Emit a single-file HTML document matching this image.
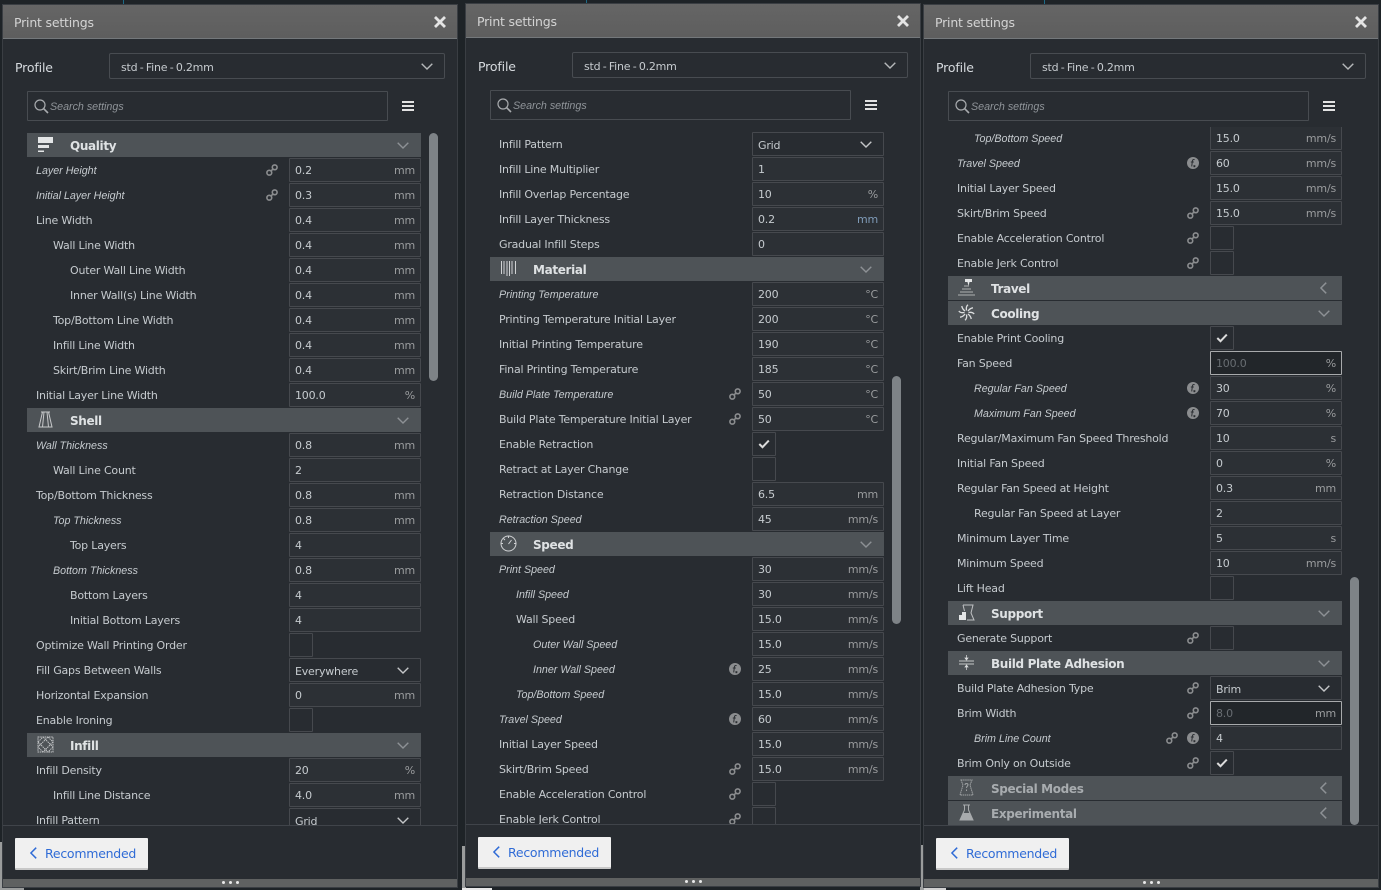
<!DOCTYPE html>
<html><head><meta charset="utf-8"><title>Print settings</title>
<style>
html,body{margin:0;padding:0;background:#1e2327;width:1381px;height:890px;overflow:hidden}
*{box-sizing:border-box}
body{font-family:"DejaVu Sans","Liberation Sans",sans-serif;font-size:11px;letter-spacing:-.2px;color:#c6cbcf}
.p{position:absolute;width:460px;height:890px}
.f{position:absolute;left:3px;top:5px;width:454px;height:882px;background:#282c31;box-shadow:0 0 0 1px #3a3e43}
.tb{position:absolute;left:3px;top:5px;width:454px;height:34px;background:linear-gradient(#656565,#5e5e5e);border-bottom:1px solid #74787b;color:#d4d4d4;font-size:12.5px;letter-spacing:-.2px;line-height:36px;padding-left:11px}
.x{position:absolute;left:433px;top:15px;width:14px;height:14px}
.pl{position:absolute;left:15px;top:59px;font-size:12.5px;letter-spacing:-.15px;line-height:18px;color:#d6dade}
.ps{position:absolute;left:109px;top:53px;width:336px;height:26px;border:1px solid #484c51;border-radius:2px;line-height:27px;padding-left:11px;color:#c6cbcf;word-spacing:-.9px;letter-spacing:-.22px}
.s{position:absolute;left:27px;top:91px;width:361px;height:30px;border:1px solid #484c51;border-radius:1px;line-height:31px;padding-left:22px;font-family:"Liberation Sans",sans-serif;font-size:10.7px;letter-spacing:0;font-style:italic;color:#8f9499}
.hb{position:absolute;left:402px;top:101px;width:12px;height:10px;border-top:2px solid #e2e2e2;border-bottom:2px solid #e2e2e2}
.hb:after{content:"";position:absolute;left:0;right:0;top:2px;height:2px;background:#e2e2e2}
.v{position:absolute;left:0;top:127px;width:460px;height:698px;overflow:hidden}
.sp{height:6px}
.r{position:relative;height:25px;line-height:26px;white-space:nowrap}
.r>span,.r>em{position:absolute;left:36px;top:0;font-style:normal}
.r>em{font-style:italic;font-family:"Liberation Sans",sans-serif;font-size:10.7px;letter-spacing:0}
.r>.a{left:53px}
.r>.c{left:70px}
.b{position:absolute;left:289px;top:0;width:132px;height:24px;background:#2c3035;border:1px solid #46494e;border-radius:1px;padding-left:5px;line-height:24px;color:#c6cbcf}
.b u{position:absolute;right:5px;top:0;text-decoration:none;color:#9a9c9e}
.fo{background:#22262a;border-color:#a8aaac;color:#686d72}
.cb{position:absolute;left:289px;top:0;width:24px;height:24px;background:#282c31;border:1px solid #46494e;border-radius:1px}
.se{line-height:26px;background:#282c31}
.h{position:relative;margin-left:27px;width:394px;height:24px;margin-bottom:1px;background:#4e5357;font-weight:bold;font-size:12px;letter-spacing:-.35px;line-height:26px;color:#dfe2e4}
.h b{position:absolute;left:43px;top:0}
.dim{color:#a8acaf}
.h svg.i{position:absolute;left:10px;top:3px;width:17px;height:17px}
svg.ch{position:absolute;left:370px;top:9px;width:12px;height:7px}
svg.cl{position:absolute;left:372px;top:6px;width:7px;height:12px}
svg.sc{position:absolute;left:107px;top:8px;width:12px;height:7px}
svg.lk{position:absolute;left:266px;top:6px;width:12px;height:12px}
svg.l2{left:245px}
svg.fx{position:absolute;left:266px;top:6px;width:12px;height:12px}
svg.ck{position:absolute;left:5px;top:6px;width:12px;height:10px}
.sb{position:absolute;left:429px;width:9px;height:248px;background:#7e8387;border-radius:4.5px}
.ft{position:absolute;left:3px;top:825px;width:454px;height:1px;background:#40444a}
.bt{position:absolute;left:15px;top:838px;width:133px;height:32px;background:#f0f0f0;border-bottom:2px solid #c8c8c8;border-radius:1px;color:#2f6bd6;font-size:12.5px;letter-spacing:-.25px;line-height:32px;padding-left:30px}
.bt svg{position:absolute;left:15px;top:9px;width:7px;height:12px}
.bb{position:absolute;left:3px;top:879px;width:454px;height:8px;background:#5f6161}
.bb i{position:absolute;top:2px;width:3px;height:3px;border-radius:50%;background:#e8e8e8}
.g{position:absolute;background:#9a9c9c}
</style></head><body>
<svg width="0" height="0" style="position:absolute">
<defs>
<symbol id="dn" viewBox="0 0 12 7"><path d="M.7.7 6 6 11.3.7" fill="none" stroke="currentColor" stroke-width="1.4"/></symbol>
<symbol id="lf" viewBox="0 0 7 12"><path d="M6.2.7.9 6l5.3 5.3" fill="none" stroke="currentColor" stroke-width="1.5"/></symbol>
<symbol id="lk" viewBox="0 0 12 12"><g fill="none" stroke="#8b8d8f" stroke-width="1.600"><circle cx="3.300" cy="8.700" r="2.400"/><circle cx="8.700" cy="3.300" r="2.400"/></g><path d="M4.600 7.400 7.400 4.600" stroke="#8b8d8f" stroke-width="1.600"/></symbol>
<symbol id="fx" viewBox="0 0 12 12"><circle cx="6" cy="6" r="6" fill="#8b8d8f"/><path d="M7.600 2.600C6.300 2.200 5.600 2.800 5.400 4L4.700 9.400M3.800 5h3M6.600 8.400 8.200 10M8.200 8.400 6.600 10" fill="none" stroke="#2b2e32" stroke-width="1"/></symbol>
<symbol id="ck" viewBox="0 0 12 10"><path d="M1.300 5 4.500 8.200 10.800 1.600" fill="none" stroke="#dcdcdc" stroke-width="2"/></symbol>
<symbol id="q" viewBox="0 0 17 17"><path d="M1 1h15v6H1zM1 9h11v3H1zM1 14.500h6V16H1z" fill="#e4e6e7"/></symbol>
<symbol id="sh" viewBox="0 0 17 17"><path d="M4 1h9M5.500 1 2 16h13L11.500 1M7 1 5.500 16M10 1l1.500 15" fill="none" stroke="#c6c8ca" stroke-width="1"/></symbol>
<symbol id="in" viewBox="0 0 17 17"><path d="M1 1h15v15H1zM1 6 6 1M11 1l5 5M16 11l-5 5M6 16l-5-5M6 1l10 10M11 1 1 11M1 6l10 10M16 6 6 16" fill="none" stroke="#bfc1c3" stroke-width="1" stroke-dasharray="1.500 .7"/></symbol>
<symbol id="ma" viewBox="0 0 17 17"><path d="M1.500 1v13M4 1v13M7 1v15M9.500 1v15M12 1v13M15.500 1v13" fill="none" stroke="#d0d2d4" stroke-width="1"/></symbol>
<symbol id="sp" viewBox="0 0 17 17"><circle cx="8.500" cy="8.500" r="7.500" fill="none" stroke="#d0d2d4" stroke-width="1"/><path d="M8.500 9 11.500 5M8.500 1v2M1 8.500h2M14 8.500h2M3.500 3.500 5 5" stroke="#d0d2d4" fill="none" stroke-width="1"/></symbol>
<symbol id="tr" viewBox="0 0 17 17"><path d="M7 0h7v3h-2.500L10.500 7 9.500 3H7z" fill="#e4e6e7"/><path d="M6 7h5M4 10h9M2 13h13M0 16h17" stroke="#aeb0b2" stroke-width="1"/></symbol>
<symbol id="co" viewBox="0 0 17 17"><g fill="none" stroke="#dcdedf" stroke-width="1.300"><path d="M8.500 6.500C8 4 8.500 2 10 .8M10.500 8.500C13 8 15 8.500 16.200 10M8.500 10.500C9 13 8.500 15 7 16.200M6.500 8.500C4 9 2 8.500.8 7M10 7C11.500 5 13 4 15 3.800M10 10c2 1.500 3 3 3.200 5M7 10c-1.500 2-3 3-5 3.200M7 7C5 5.500 4 4 3.800 2"/></g></symbol>
<symbol id="su" viewBox="0 0 17 17"><path d="M1 16v-5h3V8h4v8z" fill="#e4e6e7"/><path d="M5 1h10l-2 8 3 7H9M5 1l1.500 6" fill="none" stroke="#bfc1c3" stroke-width="1"/></symbol>
<symbol id="ad" viewBox="0 0 17 17"><path d="M1 7h15M1 10h15" stroke="#c6c8ca" stroke-width="1"/><path d="M8.500 1v4M8.500 12v4M7 4h3l-1.500 2zM7 13h3l-1.500-2z" stroke="#dcdedf" fill="#dcdedf" stroke-width=".7"/></symbol>
<symbol id="sm" viewBox="0 0 17 17"><path d="M3 1h11l-2 5 3 10H2L5 6z" fill="none" stroke="#a0a3a5" stroke-width="1" stroke-dasharray="1.500 .6"/><path d="M7 6c0-2 3-2 3 0 0 1-1.500 1.200-1.500 3M8.500 10.500v1.500" stroke="#a0a3a5" fill="none"/></symbol>
<symbol id="ex" viewBox="0 0 17 17"><path d="M5 1h7M6.500 1v5L2 16h13L10.500 6V1" fill="none" stroke="#a8abad" stroke-width="1"/><path d="M5 9h7l3 7H2z" fill="#a8abad"/></symbol>
</defs></svg>

<div class="g" style="left:0;top:842px;width:3px;height:48px"></div>
<div class="g" style="left:0;top:887px;width:24px;height:3px"></div>
<div class="g" style="left:462px;top:846px;width:4px;height:44px"></div>
<div class="g" style="left:462px;top:888px;width:30px;height:2px;background:#e8e8e8"></div>
<div class="g" style="left:920px;top:845px;width:4px;height:45px"></div>
<div class="g" style="left:924px;top:888px;width:22px;height:2px;background:#d0d0d0"></div>
<div style="position:absolute;left:123px;top:0;width:1px;height:4px;background:#1d6a86"></div>
<div style="position:absolute;left:586px;top:0;width:1px;height:3px;background:#1d6a86"></div>
<div style="position:absolute;left:1044px;top:0;width:1px;height:4px;background:#1d6a86"></div>

<!-- PANEL 1 -->
<div class="p" style="left:0;top:0">
<div class="f"></div><div class="tb">Print settings</div>
<svg class="x" viewBox="0 0 14 14"><path d="M2 2 12 12M12 2 2 12" stroke="#e4e4e4" stroke-width="2.800"/></svg>
<div class="pl">Profile</div>
<div class="ps">std - Fine - 0.2mm<svg class="ch" style="left:311px;top:9px;color:#b5b8ba" ><use href="#dn"/></svg></div>
<div class="s">Search settings<svg style="position:absolute;left:6px;top:7px;width:15px;height:15px" viewBox="0 0 15 15"><circle cx="6" cy="6" r="5" fill="none" stroke="#a8abae" stroke-width="1.200"/><path d="M9.700 9.700 14 14" stroke="#a8abae" stroke-width="1.600"/></svg></div>
<div class="hb"></div>
<div class="v"><div class="sp"></div>
<div class="h"><svg class="i"><use href="#q"/></svg><b>Quality</b><svg class="ch" style="color:#8d9195"><use href="#dn"/></svg></div>
<div class="r"><em>Layer Height</em><svg class="lk"><use href="#lk"/></svg><div class="b">0.2<u>mm</u></div></div>
<div class="r"><em>Initial Layer Height</em><svg class="lk"><use href="#lk"/></svg><div class="b">0.3<u>mm</u></div></div>
<div class="r"><span>Line Width</span><div class="b">0.4<u>mm</u></div></div>
<div class="r"><span class="a">Wall Line Width</span><div class="b">0.4<u>mm</u></div></div>
<div class="r"><span class="c">Outer Wall Line Width</span><div class="b">0.4<u>mm</u></div></div>
<div class="r"><span class="c">Inner Wall(s) Line Width</span><div class="b">0.4<u>mm</u></div></div>
<div class="r"><span class="a">Top/Bottom Line Width</span><div class="b">0.4<u>mm</u></div></div>
<div class="r"><span class="a">Infill Line Width</span><div class="b">0.4<u>mm</u></div></div>
<div class="r"><span class="a">Skirt/Brim Line Width</span><div class="b">0.4<u>mm</u></div></div>
<div class="r"><span>Initial Layer Line Width</span><div class="b">100.0<u>%</u></div></div>
<div class="h"><svg class="i"><use href="#sh"/></svg><b>Shell</b><svg class="ch" style="color:#8d9195"><use href="#dn"/></svg></div>
<div class="r"><em>Wall Thickness</em><div class="b">0.8<u>mm</u></div></div>
<div class="r"><span class="a">Wall Line Count</span><div class="b">2</div></div>
<div class="r"><span>Top/Bottom Thickness</span><div class="b">0.8<u>mm</u></div></div>
<div class="r"><em class="a">Top Thickness</em><div class="b">0.8<u>mm</u></div></div>
<div class="r"><span class="c">Top Layers</span><div class="b">4</div></div>
<div class="r"><em class="a">Bottom Thickness</em><div class="b">0.8<u>mm</u></div></div>
<div class="r"><span class="c">Bottom Layers</span><div class="b">4</div></div>
<div class="r"><span class="c">Initial Bottom Layers</span><div class="b">4</div></div>
<div class="r"><span>Optimize Wall Printing Order</span><div class="cb"></div></div>
<div class="r"><span>Fill Gaps Between Walls</span><div class="b se">Everywhere<svg class="sc" style="color:#c4c6c8"><use href="#dn"/></svg></div></div>
<div class="r"><span>Horizontal Expansion</span><div class="b">0<u>mm</u></div></div>
<div class="r"><span>Enable Ironing</span><div class="cb"></div></div>
<div class="h"><svg class="i"><use href="#in"/></svg><b>Infill</b><svg class="ch" style="color:#8d9195"><use href="#dn"/></svg></div>
<div class="r"><span>Infill Density</span><div class="b">20<u>%</u></div></div>
<div class="r"><span class="a">Infill Line Distance</span><div class="b">4.0<u>mm</u></div></div>
<div class="r"><span>Infill Pattern</span><div class="b se">Grid<svg class="sc" style="color:#c4c6c8"><use href="#dn"/></svg></div></div>
</div>
<div class="sb" style="top:133px"></div>
<div class="ft"></div>
<div class="bt"><svg style="color:#2f6bd6"><use href="#lf"/></svg>Recommended</div>
<div class="bb"><i style="left:219px"></i><i style="left:226px"></i><i style="left:233px"></i></div>
</div>

<!-- PANEL 2 -->
<div class="p" style="left:463px;top:-1px">
<div class="f"></div><div class="tb">Print settings</div>
<svg class="x" viewBox="0 0 14 14"><path d="M2 2 12 12M12 2 2 12" stroke="#e4e4e4" stroke-width="2.800"/></svg>
<div class="pl">Profile</div>
<div class="ps">std - Fine - 0.2mm<svg class="ch" style="left:311px;top:9px;color:#b5b8ba"><use href="#dn"/></svg></div>
<div class="s">Search settings<svg style="position:absolute;left:6px;top:7px;width:15px;height:15px" viewBox="0 0 15 15"><circle cx="6" cy="6" r="5" fill="none" stroke="#a8abae" stroke-width="1.200"/><path d="M9.700 9.700 14 14" stroke="#a8abae" stroke-width="1.600"/></svg></div>
<div class="hb"></div>
<div class="v"><div class="sp"></div>
<div class="r"><span>Infill Pattern</span><div class="b se">Grid<svg class="sc" style="color:#c4c6c8"><use href="#dn"/></svg></div></div>
<div class="r"><span>Infill Line Multiplier</span><div class="b">1</div></div>
<div class="r"><span>Infill Overlap Percentage</span><div class="b">10<u>%</u></div></div>
<div class="r"><span>Infill Layer Thickness</span><div class="b">0.2<u style="color:#7f9bb8">mm</u></div></div>
<div class="r"><span>Gradual Infill Steps</span><div class="b">0</div></div>
<div class="h"><svg class="i"><use href="#ma"/></svg><b>Material</b><svg class="ch" style="color:#8d9195"><use href="#dn"/></svg></div>
<div class="r"><em>Printing Temperature</em><div class="b">200<u>°C</u></div></div>
<div class="r"><span>Printing Temperature Initial Layer</span><div class="b">200<u>°C</u></div></div>
<div class="r"><span>Initial Printing Temperature</span><div class="b">190<u>°C</u></div></div>
<div class="r"><span>Final Printing Temperature</span><div class="b">185<u>°C</u></div></div>
<div class="r"><em>Build Plate Temperature</em><svg class="lk"><use href="#lk"/></svg><div class="b">50<u>°C</u></div></div>
<div class="r"><span>Build Plate Temperature Initial Layer</span><svg class="lk"><use href="#lk"/></svg><div class="b">50<u>°C</u></div></div>
<div class="r"><span>Enable Retraction</span><div class="cb"><svg class="ck"><use href="#ck"/></svg></div></div>
<div class="r"><span>Retract at Layer Change</span><div class="cb"></div></div>
<div class="r"><span>Retraction Distance</span><div class="b">6.5<u>mm</u></div></div>
<div class="r"><em>Retraction Speed</em><div class="b">45<u>mm/s</u></div></div>
<div class="h"><svg class="i"><use href="#sp"/></svg><b>Speed</b><svg class="ch" style="color:#8d9195"><use href="#dn"/></svg></div>
<div class="r"><em>Print Speed</em><div class="b">30<u>mm/s</u></div></div>
<div class="r"><em class="a">Infill Speed</em><div class="b">30<u>mm/s</u></div></div>
<div class="r"><span class="a">Wall Speed</span><div class="b">15.0<u>mm/s</u></div></div>
<div class="r"><em class="c">Outer Wall Speed</em><div class="b">15.0<u>mm/s</u></div></div>
<div class="r"><em class="c">Inner Wall Speed</em><svg class="fx"><use href="#fx"/></svg><div class="b">25<u>mm/s</u></div></div>
<div class="r"><em class="a">Top/Bottom Speed</em><div class="b">15.0<u>mm/s</u></div></div>
<div class="r"><em>Travel Speed</em><svg class="fx"><use href="#fx"/></svg><div class="b">60<u>mm/s</u></div></div>
<div class="r"><span>Initial Layer Speed</span><div class="b">15.0<u>mm/s</u></div></div>
<div class="r"><span>Skirt/Brim Speed</span><svg class="lk"><use href="#lk"/></svg><div class="b">15.0<u>mm/s</u></div></div>
<div class="r"><span>Enable Acceleration Control</span><svg class="lk"><use href="#lk"/></svg><div class="cb"></div></div>
<div class="r"><span>Enable Jerk Control</span><svg class="lk"><use href="#lk"/></svg><div class="cb"></div></div>
</div>
<div class="sb" style="top:377px"></div>
<div class="ft"></div>
<div class="bt"><svg style="color:#2f6bd6"><use href="#lf"/></svg>Recommended</div>
<div class="bb"><i style="left:219px"></i><i style="left:226px"></i><i style="left:233px"></i></div>
</div>

<!-- PANEL 3 -->
<div class="p" style="left:921px;top:0">
<div class="f"></div><div class="tb">Print settings</div>
<svg class="x" viewBox="0 0 14 14"><path d="M2 2 12 12M12 2 2 12" stroke="#e4e4e4" stroke-width="2.800"/></svg>
<div class="pl">Profile</div>
<div class="ps">std - Fine - 0.2mm<svg class="ch" style="left:311px;top:9px;color:#b5b8ba"><use href="#dn"/></svg></div>
<div class="s">Search settings<svg style="position:absolute;left:6px;top:7px;width:15px;height:15px" viewBox="0 0 15 15"><circle cx="6" cy="6" r="5" fill="none" stroke="#a8abae" stroke-width="1.200"/><path d="M9.700 9.700 14 14" stroke="#a8abae" stroke-width="1.600"/></svg></div>
<div class="hb"></div>
<div class="v"><div style="height:0;margin-top:-1px"></div>
<div class="r"><em class="a">Top/Bottom Speed</em><div class="b">15.0<u>mm/s</u></div></div>
<div class="r"><em>Travel Speed</em><svg class="fx"><use href="#fx"/></svg><div class="b">60<u>mm/s</u></div></div>
<div class="r"><span>Initial Layer Speed</span><div class="b">15.0<u>mm/s</u></div></div>
<div class="r"><span>Skirt/Brim Speed</span><svg class="lk"><use href="#lk"/></svg><div class="b">15.0<u>mm/s</u></div></div>
<div class="r"><span>Enable Acceleration Control</span><svg class="lk"><use href="#lk"/></svg><div class="cb"></div></div>
<div class="r"><span>Enable Jerk Control</span><svg class="lk"><use href="#lk"/></svg><div class="cb"></div></div>
<div class="h"><svg class="i"><use href="#tr"/></svg><b>Travel</b><svg class="cl" style="color:#8d9195"><use href="#lf"/></svg></div>
<div class="h"><svg class="i"><use href="#co"/></svg><b>Cooling</b><svg class="ch" style="color:#8d9195"><use href="#dn"/></svg></div>
<div class="r"><span>Enable Print Cooling</span><div class="cb"><svg class="ck"><use href="#ck"/></svg></div></div>
<div class="r"><span>Fan Speed</span><div class="b fo">100.0<u>%</u></div></div>
<div class="r"><em class="a">Regular Fan Speed</em><svg class="fx"><use href="#fx"/></svg><div class="b">30<u>%</u></div></div>
<div class="r"><em class="a">Maximum Fan Speed</em><svg class="fx"><use href="#fx"/></svg><div class="b">70<u>%</u></div></div>
<div class="r"><span>Regular/Maximum Fan Speed Threshold</span><div class="b">10<u>s</u></div></div>
<div class="r"><span>Initial Fan Speed</span><div class="b">0<u>%</u></div></div>
<div class="r"><span>Regular Fan Speed at Height</span><div class="b">0.3<u>mm</u></div></div>
<div class="r"><span class="a">Regular Fan Speed at Layer</span><div class="b">2</div></div>
<div class="r"><span>Minimum Layer Time</span><div class="b">5<u>s</u></div></div>
<div class="r"><span>Minimum Speed</span><div class="b">10<u>mm/s</u></div></div>
<div class="r"><span>Lift Head</span><div class="cb"></div></div>
<div class="h"><svg class="i"><use href="#su"/></svg><b>Support</b><svg class="ch" style="color:#8d9195"><use href="#dn"/></svg></div>
<div class="r"><span>Generate Support</span><svg class="lk"><use href="#lk"/></svg><div class="cb"></div></div>
<div class="h"><svg class="i"><use href="#ad"/></svg><b>Build Plate Adhesion</b><svg class="ch" style="color:#8d9195"><use href="#dn"/></svg></div>
<div class="r"><span>Build Plate Adhesion Type</span><svg class="lk"><use href="#lk"/></svg><div class="b se">Brim<svg class="sc" style="color:#c4c6c8"><use href="#dn"/></svg></div></div>
<div class="r"><span>Brim Width</span><svg class="lk"><use href="#lk"/></svg><div class="b fo">8.0<u>mm</u></div></div>
<div class="r"><em class="a">Brim Line Count</em><svg class="lk l2"><use href="#lk"/></svg><svg class="fx"><use href="#fx"/></svg><div class="b">4</div></div>
<div class="r"><span>Brim Only on Outside</span><svg class="lk"><use href="#lk"/></svg><div class="cb"><svg class="ck"><use href="#ck"/></svg></div></div>
<div class="h dim"><svg class="i"><use href="#sm"/></svg><b>Special Modes</b><svg class="cl" style="color:#8d9195"><use href="#lf"/></svg></div>
<div class="h dim"><svg class="i"><use href="#ex"/></svg><b>Experimental</b><svg class="cl" style="color:#8d9195"><use href="#lf"/></svg></div>
</div>
<div class="sb" style="top:577px"></div>
<div class="ft"></div>
<div class="bt"><svg style="color:#2f6bd6"><use href="#lf"/></svg>Recommended</div>
<div class="bb"><i style="left:219px"></i><i style="left:226px"></i><i style="left:233px"></i></div>
</div>
</body></html>
